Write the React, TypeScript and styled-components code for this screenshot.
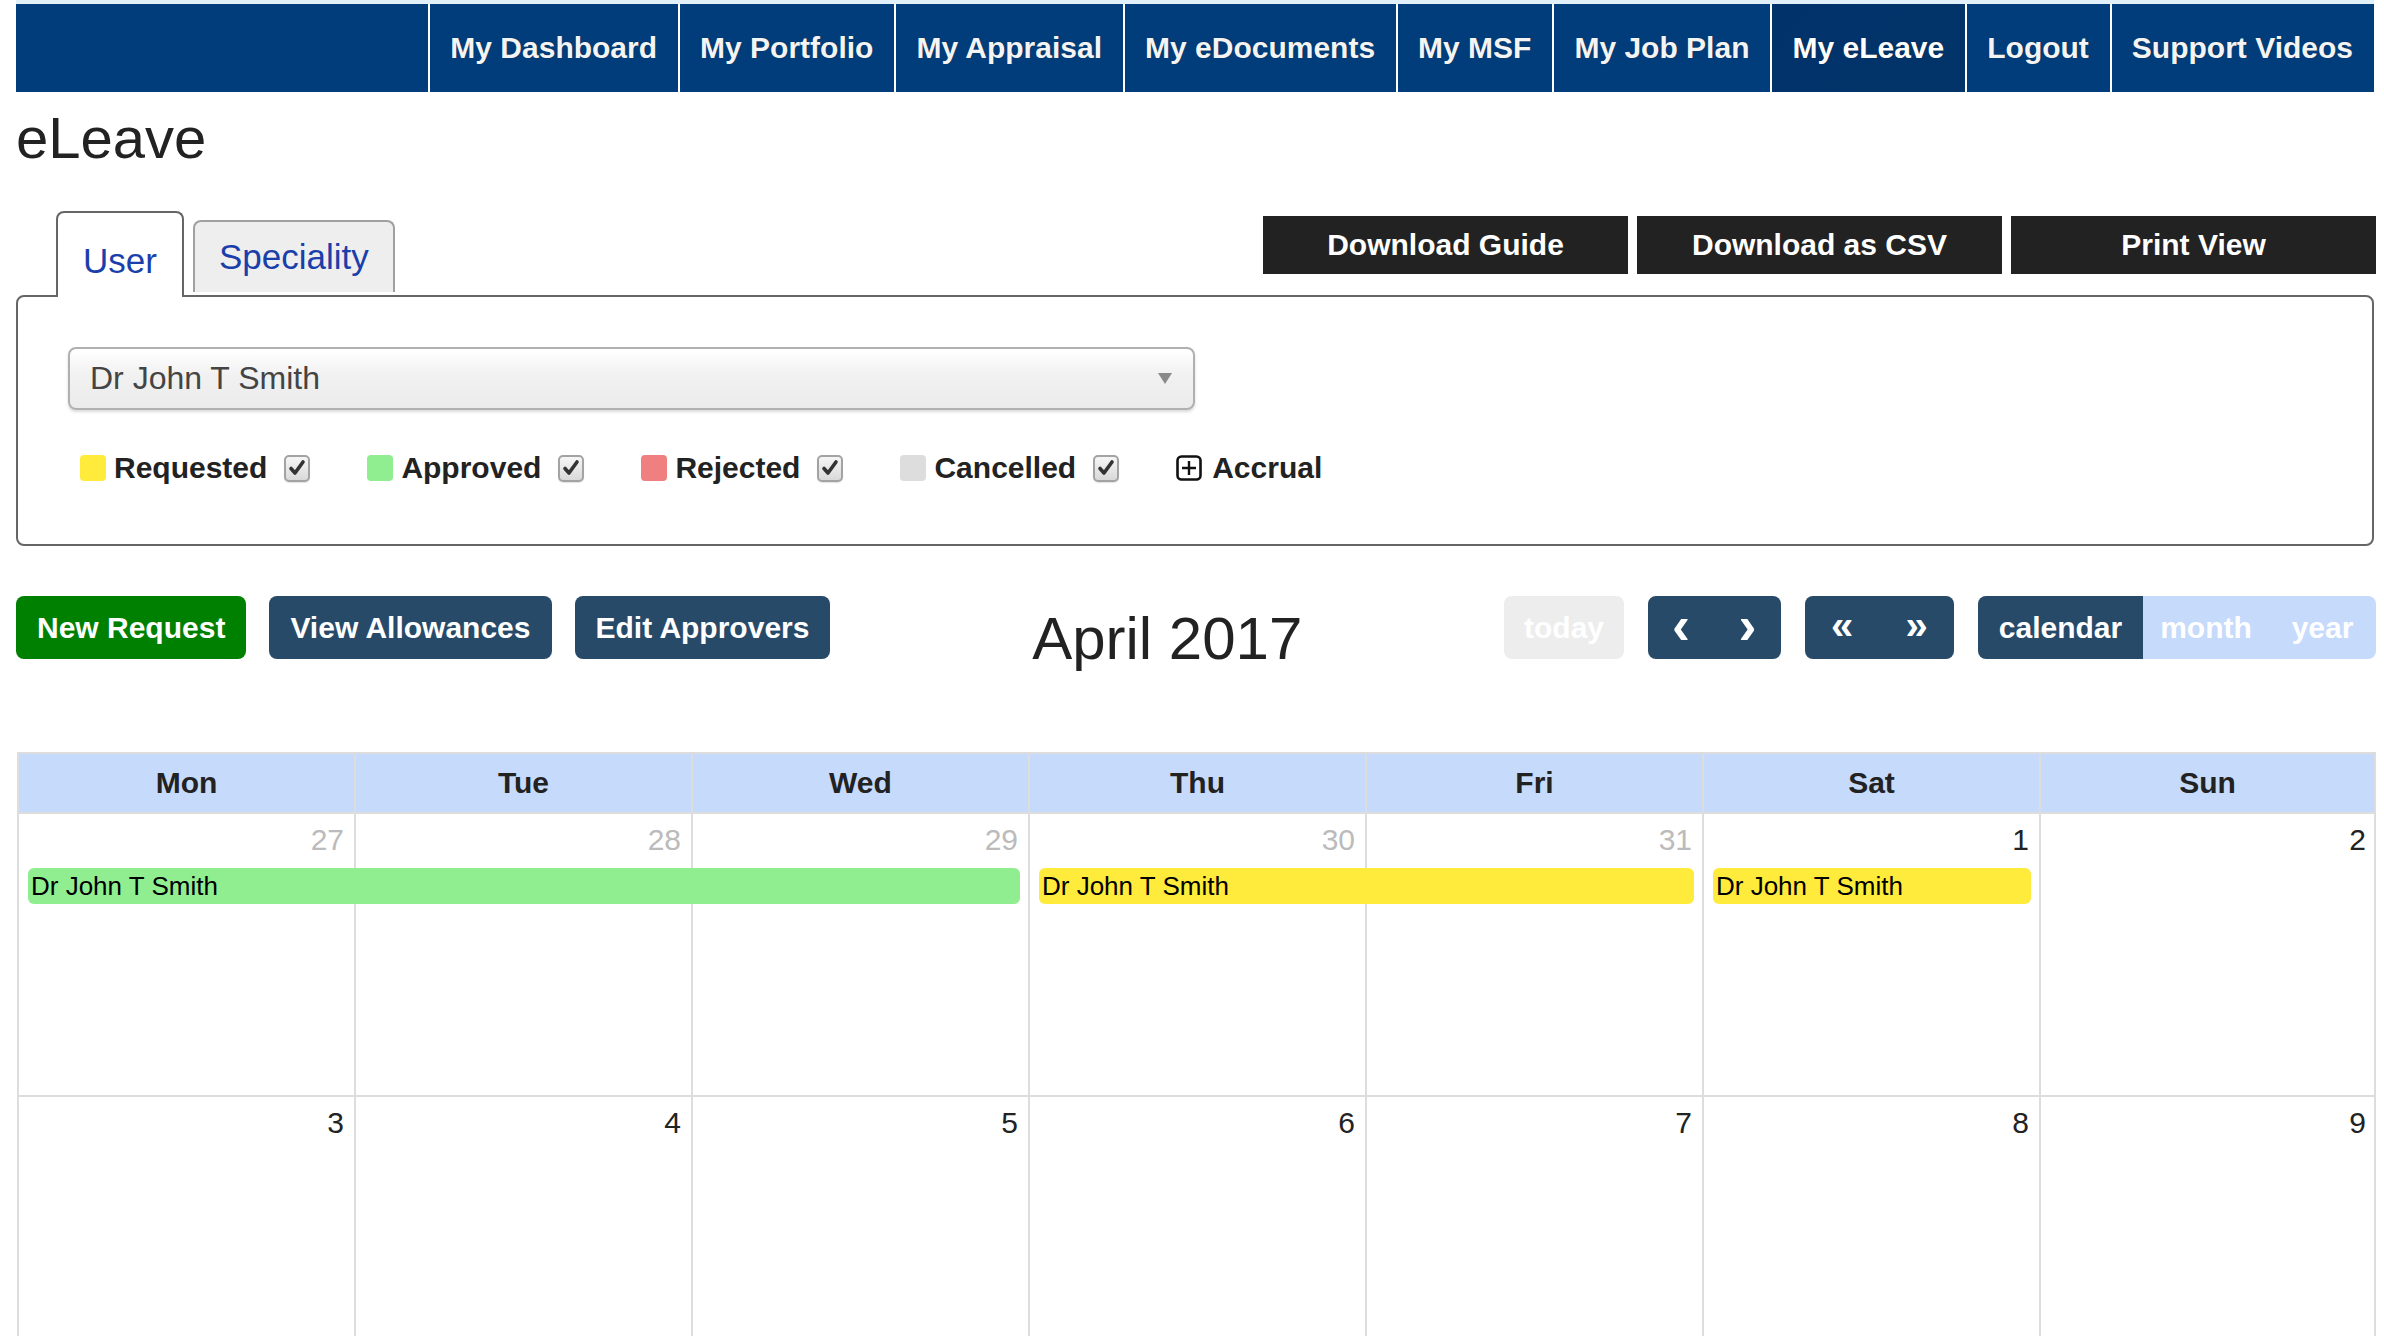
import React from "react";
import styled, { createGlobalStyle, css } from "styled-components";

const GlobalStyle = createGlobalStyle`
  html, body {
    margin: 0;
    padding: 0;
    background: #ffffff;
    font-family: "Liberation Sans", Arial, Helvetica, sans-serif;
    color: #222222;
  }
  * { box-sizing: border-box; }
`;

const Page = styled.div`
  padding: 0 8px 0 16px;
`;

const TopStrip = styled.div`
  height: 4px;
  background: #e2f0fa;
  margin-right: 2px;
`;

const NavBar = styled.nav`
  display: flex;
  justify-content: flex-end;
  height: 88px;
  margin-right: 2px;
  background: #023d7b;
`;

const NavItem = styled.a<{ $active?: boolean }>`
  display: flex;
  align-items: center;
  padding: 0 21px 0 20px;
  border-left: 2px solid #ffffff;
  color: #f4f4f4;
  font-size: 30px;
  font-weight: bold;
  text-decoration: none;
  white-space: nowrap;
  text-shadow: 0 0 1px rgba(0, 0, 0, 0.45);
  ${(p) =>
    p.$active &&
    css`
      background: linear-gradient(135deg, #01326a 0%, #023469 100%);
      color: #ffffff;
    `}
`;

const Title = styled.h1`
  margin: 13px 0 0 0;
  font-size: 58px;
  line-height: 66px;
  font-weight: normal;
  color: #222;
`;

const TabsRow = styled.div`
  display: flex;
  justify-content: space-between;
  align-items: flex-start;
  height: 86px;
  margin-top: 40px;
  margin-bottom: -2px;
  position: relative;
  z-index: 1;
`;

const Tabs = styled.div`
  display: flex;
  align-items: flex-end;
  gap: 9px;
  height: 100%;
  padding-left: 40px;
`;

const Tab = styled.div<{ $active?: boolean }>`
  font-size: 35px;
  line-height: 40px;
  color: #1b3faa;
  border-radius: 8px 8px 0 0;
  ${(p) =>
    p.$active
      ? css`
          height: 86px;
          padding: 28px 25px 0;
          background: #ffffff;
          border: 2px solid #666666;
          border-bottom: 0;
        `
      : css`
          height: 72px;
          margin-bottom: 5px;
          padding: 15px 24px 0;
          background: #eeeeee;
          border: 2px solid #a0a0a0;
          border-bottom: 0;
        `}
`;

const ExportButtons = styled.div`
  display: flex;
  gap: 9px;
  margin-top: 5px;
`;

const ExportButton = styled.button`
  width: 365px;
  height: 58px;
  border: 0;
  border-radius: 0;
  background: #222222;
  color: #ffffff;
  font-family: inherit;
  font-size: 30px;
  font-weight: bold;
`;

const Panel = styled.section`
  border: 2px solid #666666;
  border-radius: 8px;
  margin-right: 2px;
  padding: 50px 50px 58px 50px;
`;

const Select = styled.div`
  display: flex;
  align-items: center;
  justify-content: space-between;
  width: 1127px;
  height: 63px;
  padding: 0 20px;
  border: 2px solid #b0b0b0;
  border-radius: 8px;
  background: linear-gradient(to bottom, #ffffff 0%, #f1f1f1 45%, #ebebeb 100%);
  box-shadow: 0 2px 3px rgba(0, 0, 0, 0.15);
  font-size: 32px;
  color: #444444;
`;

const Legend = styled.div`
  display: flex;
  align-items: center;
  gap: 57px;
  height: 36px;
  margin-top: 40px;
  padding-left: 12px;
`;

const LegendItem = styled.label`
  display: flex;
  align-items: center;
`;

const Swatch = styled.span<{ $color: string }>`
  width: 26px;
  height: 26px;
  border-radius: 4px;
  background: ${(p) => p.$color};
  margin-right: 8px;
`;

const LegendLabel = styled.span`
  font-size: 30px;
  font-weight: bold;
  color: #222222;
`;

const CheckBox = styled.span`
  display: flex;
  align-items: center;
  justify-content: center;
  width: 26px;
  height: 27px;
  margin-left: 17px;
  border: 2px solid #a3a3a3;
  border-radius: 5px;
  background: linear-gradient(to bottom, #f6f6f6, #d9d9d9);
  box-shadow: 0 1px 1px rgba(0, 0, 0, 0.12);
`;

const AccrualIcon = styled.span`
  display: flex;
  margin-right: 10px;
`;

const Toolbar = styled.div`
  display: flex;
  align-items: flex-start;
  margin-top: 50px;
`;

const ToolGroup = styled.div<{ $gap: number }>`
  display: flex;
  gap: ${(p) => p.$gap}px;
`;

const ActionButton = styled.button<{ $variant: "green" | "navy" }>`
  height: 63px;
  padding: 0 21px;
  border: 0;
  border-radius: 8px;
  background: ${(p) => (p.$variant === "green" ? "#008000" : "#274a69")};
  color: #ffffff;
  font-family: inherit;
  font-size: 30px;
  font-weight: bold;
  white-space: nowrap;
`;

const MonthTitle = styled.h2`
  flex: 1;
  margin: 8px 0 0 0;
  text-align: center;
  font-size: 60px;
  line-height: 69px;
  font-weight: normal;
  color: #222;
`;

const ButtonGroup = styled.div`
  display: flex;
  height: 63px;
  border-radius: 8px;
  overflow: hidden;
`;

const GroupButton = styled.button<{ $tone: "navy" | "light" | "disabled"; $width: number }>`
  display: flex;
  align-items: center;
  justify-content: center;
  width: ${(p) => p.$width}px;
  height: 63px;
  padding: 0;
  border: 0;
  font-family: inherit;
  font-size: 30px;
  font-weight: bold;
  color: #ffffff;
  background: ${(p) =>
    p.$tone === "navy" ? "#274a69" : p.$tone === "light" ? "#c6dafc" : "#ededed"};
`;

const Arrow = styled.span<{ $size: number }>`
  font-size: ${(p) => p.$size}px;
  line-height: 1;
  font-weight: bold;
  margin-top: -6px;
`;

const Calendar = styled.div`
  margin-top: 79px;
  margin-left: 1px;
`;

const HeaderRow = styled.div`
  display: grid;
  grid-template-columns: repeat(7, 1fr);
  height: 62px;
  border-top: 2px solid #dddddd;
  border-bottom: 2px solid #dddddd;
  background: #c6dafc;
`;

const HeaderCell = styled.div<{ $last?: boolean }>`
  display: flex;
  align-items: center;
  justify-content: center;
  border-left: 2px solid #dddddd;
  ${(p) => p.$last && "border-right: 2px solid #dddddd;"}
  font-size: 30px;
  font-weight: bold;
  color: #222222;
`;

const WeekRow = styled.div<{ $last?: boolean }>`
  display: grid;
  grid-template-columns: repeat(7, 1fr);
  grid-template-rows: auto auto 1fr;
  min-height: ${(p) => (p.$last ? 300 : 283)}px;
  border-bottom: ${(p) => (p.$last ? "0" : "2px solid #dddddd")};
`;

const DayCell = styled.div<{ $col: number }>`
  grid-column: ${(p) => p.$col};
  grid-row: 1 / span 3;
  border-left: 2px solid #dddddd;
  ${(p) => p.$col === 7 && "border-right: 2px solid #dddddd;"}
`;

const DayNumber = styled.div<{ $col: number; $muted?: boolean }>`
  grid-column: ${(p) => p.$col};
  grid-row: 1;
  padding: 8px 10px 0 0;
  text-align: right;
  font-size: 30px;
  line-height: 36px;
  color: ${(p) => (p.$muted ? "#bbbbbb" : "#222222")};
`;

const EventBar = styled.div<{ $color: string; $start: number; $span: number }>`
  grid-column: ${(p) => p.$start} / span ${(p) => p.$span};
  grid-row: 2;
  margin: 10px 8px 0 11px;
  height: 36px;
  padding-left: 3px;
  border-radius: 6px;
  background: ${(p) => p.$color};
  color: #000000;
  font-size: 26px;
  line-height: 36px;
  white-space: nowrap;
  overflow: hidden;
`;

const navItems = [
  "My Dashboard",
  "My Portfolio",
  "My Appraisal",
  "My eDocuments",
  "My MSF",
  "My Job Plan",
  "My eLeave",
  "Logout",
  "Support Videos",
];

const legend = [
  { label: "Requested", color: "#ffeb3b" },
  { label: "Approved", color: "#90ee90" },
  { label: "Rejected", color: "#f08080" },
  { label: "Cancelled", color: "#dddddd" },
];

const dayNames = ["Mon", "Tue", "Wed", "Thu", "Fri", "Sat", "Sun"];

type Day = { n: number; muted: boolean };
type Ev = { start: number; span: number; color: string; title: string };

const weeks: { days: Day[]; events: Ev[] }[] = [
  {
    days: [
      { n: 27, muted: true },
      { n: 28, muted: true },
      { n: 29, muted: true },
      { n: 30, muted: true },
      { n: 31, muted: true },
      { n: 1, muted: false },
      { n: 2, muted: false },
    ],
    events: [
      { start: 1, span: 3, color: "#90ee90", title: "Dr John T Smith" },
      { start: 4, span: 2, color: "#ffeb3b", title: "Dr John T Smith" },
      { start: 6, span: 1, color: "#ffeb3b", title: "Dr John T Smith" },
    ],
  },
  {
    days: [3, 4, 5, 6, 7, 8, 9].map((n) => ({ n, muted: false })),
    events: [],
  },
];

const CheckMark = () => (
  <svg width="18" height="18" viewBox="0 0 18 18">
    <path d="M3 9.5 L7 14 L15 3" fill="none" stroke="#333" strokeWidth="3.6" strokeLinecap="round" strokeLinejoin="round" />
  </svg>
);

const PlusBox = () => (
  <svg width="26" height="26" viewBox="0 0 26 26">
    <rect x="1.5" y="1.5" width="23" height="23" rx="4" fill="#fff" stroke="#111" strokeWidth="2.6" />
    <path d="M13 6 V20 M6 13 H20" stroke="#111" strokeWidth="2.4" />
  </svg>
);

const DownTriangle = () => (
  <svg width="16" height="13" viewBox="0 0 16 13">
    <path d="M1 1 H15 L8 12 Z" fill="#8a8a8a" />
  </svg>
);

export default function App() {
  return (
    <>
      <GlobalStyle />
      <Page>
        <TopStrip />
        <NavBar>
          {navItems.map((item) => (
            <NavItem key={item} $active={item === "My eLeave"}>
              {item}
            </NavItem>
          ))}
        </NavBar>

        <Title>eLeave</Title>

        <TabsRow>
          <Tabs>
            <Tab $active>User</Tab>
            <Tab>Speciality</Tab>
          </Tabs>
          <ExportButtons>
            <ExportButton>Download Guide</ExportButton>
            <ExportButton>Download as CSV</ExportButton>
            <ExportButton>Print View</ExportButton>
          </ExportButtons>
        </TabsRow>

        <Panel>
          <Select>
            <span>Dr John T Smith</span>
            <DownTriangle />
          </Select>
          <Legend>
            {legend.map((l) => (
              <LegendItem key={l.label}>
                <Swatch $color={l.color} />
                <LegendLabel>{l.label}</LegendLabel>
                <CheckBox>
                  <CheckMark />
                </CheckBox>
              </LegendItem>
            ))}
            <LegendItem>
              <AccrualIcon>
                <PlusBox />
              </AccrualIcon>
              <LegendLabel>Accrual</LegendLabel>
            </LegendItem>
          </Legend>
        </Panel>

        <Toolbar>
          <ToolGroup $gap={23}>
            <ActionButton $variant="green">New Request</ActionButton>
            <ActionButton $variant="navy">View Allowances</ActionButton>
            <ActionButton $variant="navy">Edit Approvers</ActionButton>
          </ToolGroup>
          <MonthTitle>April 2017</MonthTitle>
          <ToolGroup $gap={24}>
            <ButtonGroup>
              <GroupButton $tone="disabled" $width={120}>today</GroupButton>
            </ButtonGroup>
            <ButtonGroup>
              <GroupButton $tone="navy" $width={66}>
                <Arrow $size={54}>‹</Arrow>
              </GroupButton>
              <GroupButton $tone="navy" $width={67}>
                <Arrow $size={54}>›</Arrow>
              </GroupButton>
            </ButtonGroup>
            <ButtonGroup>
              <GroupButton $tone="navy" $width={74}>
                <Arrow $size={40}>«</Arrow>
              </GroupButton>
              <GroupButton $tone="navy" $width={75}>
                <Arrow $size={40}>»</Arrow>
              </GroupButton>
            </ButtonGroup>
            <ButtonGroup>
              <GroupButton $tone="navy" $width={165}>calendar</GroupButton>
              <GroupButton $tone="light" $width={126}>month</GroupButton>
              <GroupButton $tone="light" $width={107}>year</GroupButton>
            </ButtonGroup>
          </ToolGroup>
        </Toolbar>

        <Calendar>
          <HeaderRow>
            {dayNames.map((d, i) => (
              <HeaderCell key={d} $last={i === 6}>
                {d}
              </HeaderCell>
            ))}
          </HeaderRow>
          {weeks.map((w, wi) => (
            <WeekRow key={wi} $last={wi === weeks.length - 1}>
              {w.days.map((d, i) => (
                <DayCell key={`c${i}`} $col={i + 1} />
              ))}
              {w.days.map((d, i) => (
                <DayNumber key={`n${i}`} $col={i + 1} $muted={d.muted}>
                  {d.n}
                </DayNumber>
              ))}
              {w.events.map((e, ei) => (
                <EventBar key={`e${ei}`} $color={e.color} $start={e.start} $span={e.span}>
                  {e.title}
                </EventBar>
              ))}
            </WeekRow>
          ))}
        </Calendar>
      </Page>
    </>
  );
}
